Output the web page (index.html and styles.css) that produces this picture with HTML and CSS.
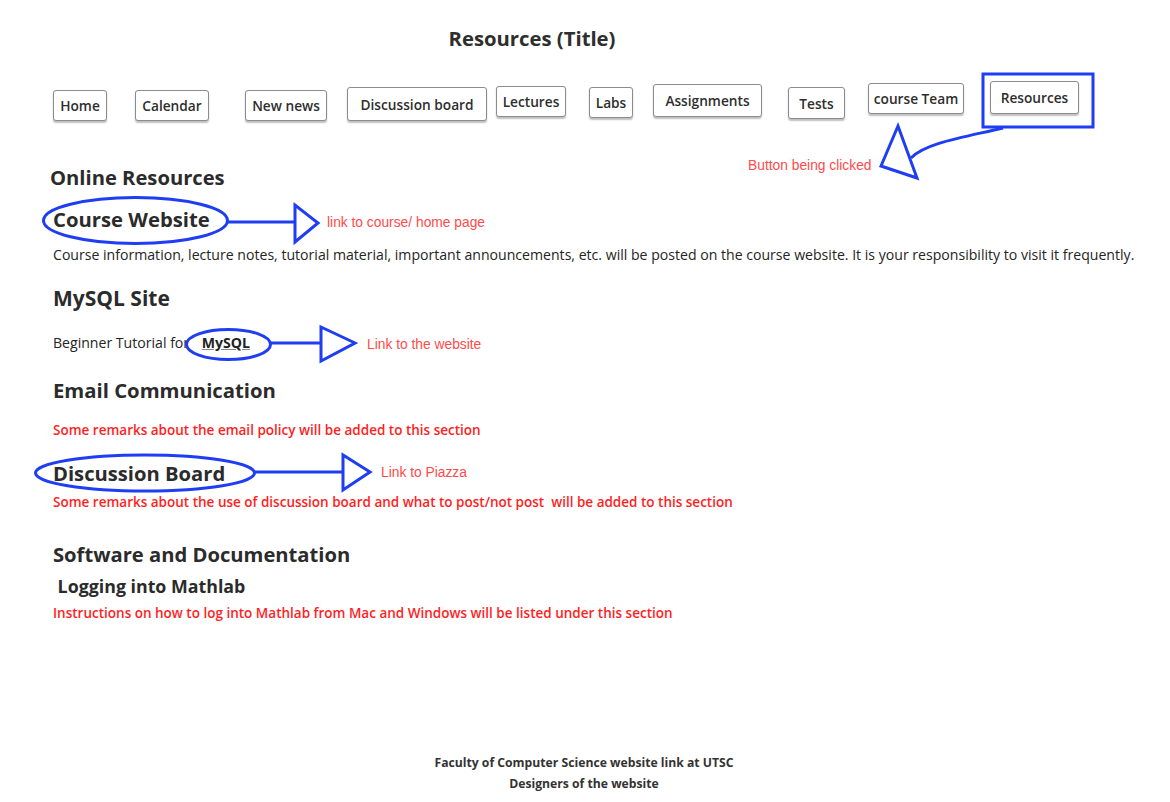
FILE: index.html
```html
<!DOCTYPE html>
<html lang="en">
<head>
<meta charset="utf-8">
<title>Resources</title>
<link rel="stylesheet" href="styles.css">
</head>
<body>
<div class="page">
  <header class="top">
    <h1 class="title">Resources (Title)</h1>
    <nav class="nav">
      <span class="btn">Home</span>
      <span class="btn">Calendar</span>
      <span class="btn">New news</span>
      <span class="btn">Discussion board</span>
      <span class="btn">Lectures</span>
      <span class="btn">Labs</span>
      <span class="btn">Assignments</span>
      <span class="btn">Tests</span>
      <span class="btn">course Team</span>
      <span class="btn">Resources</span>
    </nav>
  </header>

  <main class="content">
    <h2 class="h-online">Online Resources</h2>
    <h3 class="h-course">Course Website</h3>
    <p class="para">Course information, lecture notes, tutorial material, important announcements, etc. will be posted on the course website. It is your responsibility to visit it frequently.</p>
    <h3 class="h-mysql">MySQL Site</h3>
    <p class="para p-begin">Beginner Tutorial for <a class="link">MySQL</a></p>
    <h3 class="h-email">Email Communication</h3>
    <p class="para red p-email">Some remarks about the email policy will be added to this section</p>
    <h3 class="h-disc">Discussion Board</h3>
    <p class="para red p-disc">Some remarks about the use of discussion board and what to post/not post&nbsp; will be added to this section</p>
    <h3 class="h-soft">Software and Documentation</h3>
    <h4 class="h-log">&nbsp;Logging into Mathlab</h4>
    <p class="para red p-log">Instructions on how to log into Mathlab from Mac and Windows will be listed under this section</p>
  </main>

  <footer class="footer">
    <div>Faculty of Computer Science website link at UTSC</div>
    <div>Designers of the website</div>
  </footer>

  <div class="annotations">
    <svg class="marks" width="1170" height="802" viewBox="0 0 1170 802" fill="none" stroke="#1f3df2" stroke-width="3" stroke-linejoin="miter">
      <rect x="983" y="74" width="110" height="53"/>
      <path d="M1003 128 C 965 137 925 143 911 158"/>
      <polygon points="898,126 881,166 917,178"/>

      <ellipse cx="135.5" cy="220.5" rx="92" ry="23"/>
      <line x1="228" y1="222" x2="295" y2="222"/>
      <polygon points="295,205 295,242 318,223"/>

      <ellipse cx="228.5" cy="344.5" rx="42" ry="15"/>
      <line x1="271" y1="343" x2="321" y2="343"/>
      <polygon points="321,327 321,361 355,343"/>

      <ellipse cx="145" cy="473" rx="109.5" ry="18"/>
      <line x1="255" y1="472" x2="343" y2="472"/>
      <polygon points="343,455 343,490 370,472"/>
    </svg>
    <span class="note n-click">Button being clicked</span>
    <span class="note n-course">link to course/ home page</span>
    <span class="note n-mysql">Link to the website</span>
    <span class="note n-piazza">Link to Piazza</span>
  </div>
</div>
</body>
</html>
```

FILE: styles.css
```css
* { box-sizing: border-box; }

html, body {
  margin: 0;
  padding: 0;
  background: #ffffff;
}

body {
  font-family: "Open Sans", "Noto Sans", sans-serif;
  color: #2b2b2b;
}

.page {
  position: relative;
  width: 1170px;
  height: 802px;
  padding-top: 24px;
  overflow: hidden;
}

.title {
  margin: 0;
  width: 1064px;
  text-align: center;
  font-size: 20.3px;
  line-height: 28px;
  font-weight: 700;
  color: #2e2e2e;
}

.nav {
  display: flex;
  align-items: flex-start;
  margin-top: 29px;
  padding-left: 53px;
  height: 40px;
}

.btn {
  display: flex;
  align-items: center;
  justify-content: center;
  height: 31px;
  border: 1.5px solid #8c8c8c;
  border-radius: 3px;
  background: #fff;
  box-shadow: 0 1.5px 1.5px rgba(0, 0, 0, 0.25);
  font-size: 13.7px;
  font-weight: 600;
  color: #2e2e2e;
  white-space: nowrap;
}

.btn:nth-child(1)  { width: 54px;  margin-top: 9px; }
.btn:nth-child(2)  { width: 74px;  margin-top: 9px; margin-left: 28px; }
.btn:nth-child(3)  { width: 82px;  margin-top: 9px; margin-left: 36px; }
.btn:nth-child(4)  { width: 140px; margin-top: 6px; margin-left: 20px; height: 34px; }
.btn:nth-child(5)  { width: 70px;  margin-top: 5px; margin-left: 9px; }
.btn:nth-child(6)  { width: 44px;  margin-top: 6px; margin-left: 23px; }
.btn:nth-child(7)  { width: 109px; margin-top: 3px; margin-left: 20px; height: 33px; }
.btn:nth-child(8)  { width: 57px;  margin-top: 6px; margin-left: 26px; height: 32px; }
.btn:nth-child(9)  { width: 96px;  margin-top: 2px; margin-left: 23px; }
.btn:nth-child(10) { width: 89px;  margin-top: 0;   margin-left: 26px; height: 33px; }

.content {
  padding-left: 53px;
}

.content h2, .content h3, .content h4, .content p {
  margin: 0;
  font-weight: 700;
  white-space: nowrap;
}

.h-online {
  margin-left: -3px !important;
  margin-top: 44px !important;
  font-size: 20.2px;
  line-height: 24px;
}

.h-course {
  margin-top: 17px !important;
  font-size: 20.3px;
  line-height: 26px;
}

.para {
  font-size: 14.1px;
  line-height: 20px;
  font-weight: 500 !important;
  color: #242424;
}

.content .para { margin-top: 13px; }

.h-mysql {
  margin-top: 21px !important;
  font-size: 21px;
  line-height: 24px;
}

.content .p-begin { margin-top: 23px; }

.link {
  font-weight: 700;
  color: #222;
  text-decoration: underline;
  text-decoration-color: #888;
  margin-left: 9px;
}

.h-email {
  margin-top: 25px !important;
  font-size: 20.3px;
  line-height: 24px;
}

.red { color: #ff1e1e !important; font-weight: 600 !important; }

.content .p-email { margin-top: 18px; }

.h-disc {
  margin-top: 21px !important;
  font-size: 20.2px;
  line-height: 24px;
}

.content .p-disc { margin-top: 7px; }

.h-soft {
  margin-top: 30px !important;
  font-size: 20.2px;
  line-height: 24px;
}

.h-log {
  margin-top: 8px !important;
  font-size: 17.8px;
  line-height: 24px;
}

.content .p-log { margin-top: 5px; }

.content .p-email, .content .p-disc, .content .p-log { font-size: 13.5px; }

.footer {
  margin-top: 129px;
  text-align: center;
  font-size: 12.2px;
  line-height: 21px;
  font-weight: 700;
  color: #333;
  padding-right: 2px;
}

.annotations {
  position: absolute;
  inset: 0;
  pointer-events: none;
}

.marks {
  position: absolute;
  left: 0;
  top: 0;
}

.note {
  position: absolute;
  font-family: "Liberation Sans", Arial, sans-serif;
  font-size: 13.8px;
  line-height: 16px;
  color: #ff4a4a;
  white-space: nowrap;
}

.n-click  { left: 748px; top: 158px; }
.n-course { left: 327px; top: 215px; }
.n-mysql  { left: 367px; top: 337px; }
.n-piazza { left: 381px; top: 465px; }
```
